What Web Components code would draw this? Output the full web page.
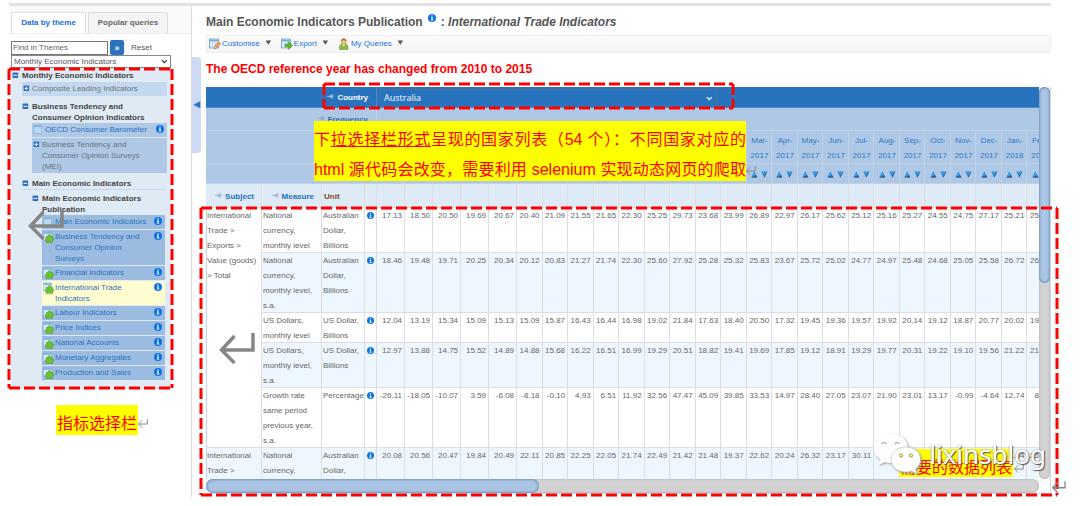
<!DOCTYPE html>
<html lang="en">
<head>
<meta charset="utf-8">
<title>Main Economic Indicators Publication</title>
<style>
body { margin: 0; background: #fff; font: 8px/11px "Liberation Sans", "Noto Sans CJK SC", sans-serif; color: #666; }
</style>
</head>
<body>
<stats-page></stats-page>
<script>
const make = (name, html, setup) => customElements.define(name, class extends HTMLElement {
  connectedCallback() {
    if (this.shadowRoot) return;
    const root = this.attachShadow({ mode: 'open' });
    const t = document.createElement('template');
    t.innerHTML = typeof html === 'function' ? html(this) : html;
    root.append(t.content.cloneNode(true));
    if (setup) setup(this, root);
  }
});

/* Round blue information badge */
make('info-dot', `<style>:host{display:block;width:8px;height:8px;flex:none}svg{display:block;width:100%;height:100%}</style>
<svg viewBox="0 0 16 16"><circle cx="8" cy="8" r="8" fill="#0b73ea"/><path d="M6 6.6h3.4v5h1.2v1.4H5.6v-1.4h1.2V8H6z" fill="#fff"/><circle cx="8" cy="4" r="1.5" fill="#fff"/></svg>`);

/* Small icons, picked by name */
const sheet = `<rect x="1" y="2" width="17" height="17" fill="#eaf6ff" stroke="#5f94c6" stroke-width="1.5"/><path d="M1 5h17" stroke="#6faadd" stroke-width="3"/><path d="M1 10h17M1 14.500h17M7 5v14M12.500 5v14" stroke="#a5cbe6" stroke-width="1"/>`;
const icons = {
  customise: sheet + `<path d="M10 21l1.500-6 7-8 4 3.500-7 8z" fill="#f0a24e" stroke="#b4691e"/><path d="M10 21l1.500-6 4 3.500z" fill="#f7dfb8" stroke="#8a5a2a" stroke-width=".6"/>`,
  export: sheet + `<path d="M8 12h6V7.500l8.500 7-8.500 7V17H8z" fill="#5cbd2b" stroke="#2e8410"/>`,
  user: `<path d="M3 22c-1-8 2-11 8-11s9 3 8 11z" fill="#8cbf3f" stroke="#5f8a22"/><path d="M8 12l3 4 3-4z" fill="#fff"/><circle cx="11" cy="6.500" r="5" fill="#f1c58d" stroke="#a86e2c"/><path d="M6 6c0-7 10-7 10 0-3-2-7-2-10 0z" fill="#b5732d"/>`,
  sheet: `<rect x="2" y="2" width="16" height="16" fill="#bcd9f2" stroke="#7fabd8"/><path d="M2 4h16" stroke="#7db1e2" stroke-width="3"/>`,
  puzzle: `<rect x="1" y="1" width="17" height="17" fill="#d8eaf8" stroke="#86aed6"/><path d="M1 3h17" stroke="#6fa6dc" stroke-width="3"/><path d="M7 10h4.500c-1.500-5 5-5 4 0H20v4c4-1 4 4.500 0 3.800V23h-5c1-3.500-3.500-3.500-2.500 0H7v-4c-3.500.8-3.500-5 0-4.200z" fill="#6cc332" stroke="#3e8f1b"/>`,
  plus: `<rect x="2" y="2" width="18" height="18" rx="2" fill="#2a6fb8"/><path d="M5 11h12M11 5v12" stroke="#fff" stroke-width="3"/>`,
  minus: `<rect x="2" y="2" width="18" height="18" rx="2" fill="#2a6fb8"/><path d="M5 11h12" stroke="#fff" stroke-width="3.500"/>`,
  pin: `<path d="M1 11h11M8 6l5 5-5 5M15 4v14M19 4v14M15 11h4" fill="none" stroke="currentColor" stroke-width="2"/>`,
  caret: `<path d="M2 5h18l-9 14z" fill="#555"/>`,
  chevron: `<path d="M3 7l8 8 8-8" fill="none" stroke="currentColor" stroke-width="4"/>`,
  up: `<path d="M1 21L11 2l10 19z" fill="#1d83d6"/><path d="M1 21h20l-4-7z" fill="#425a78"/><path d="M4 18L11 5l4 8z" fill="#3aa5f2"/>`,
  down: `<path d="M1 2h20L11 21z" fill="#1d83d6"/><path d="M21 2L11 21l-2-4z" fill="#425a78"/><path d="M4 4h13l-6 8z" fill="#3aa5f2"/>`,
  left: `<path d="M21 1v20L1 11z" fill="#2d70be"/>`
};
make('ui-icon', el => `<style>:host{display:block;width:11px;height:11px;flex:none}svg{display:block;width:100%;height:100%}</style>
<svg viewBox="0 0 23 23">${icons[el.getAttribute('name')]}</svg>`);

/* Paragraph-return mark */
make('return-mark', `<style>:host{display:block;color:#868686;width:10px;height:9px}svg{display:block;width:100%;height:100%}</style>
<svg viewBox="0 0 36 32"><path d="M33.500 1v17H3M15 4L2 18l13 13" fill="none" stroke="currentColor" stroke-width="3.500"/></svg>`);

/* Dashed red outline */
make('mark-box', `<style>:host{display:block;pointer-events:none}svg{display:block;width:100%;height:100%;overflow:visible}</style>
<svg><g stroke="#f00" stroke-width="3" stroke-dasharray="11 4"><line x1="0" y1="0" x2="100%" y2="0"/><line x1="100%" y1="0" x2="100%" y2="100%"/><line x1="0" y1="100%" x2="100%" y2="100%"/><line x1="0" y1="0" x2="0" y2="100%"/></g></svg>`);

/* Yellow note with red text */
make('mark-note', `<style>:host{display:block;box-sizing:border-box;background:#ff0;color:#f00;font-size:16px;line-height:30px;white-space:nowrap}:host([spread]){white-space:normal;text-align:justify;text-align-last:justify}</style><slot></slot>`);

make('theme-tabs', `<style>
:host{display:flex;gap:2px;padding:6px 2px 0;background:#fafafa;border-bottom:1px solid #eee}
button{font:bold 8px/20px "Liberation Sans",sans-serif;color:#666;background:#f4f4f4;border:1px solid #ddd;border-bottom:0;padding:0;flex:none;width:80px;border-radius:2px 2px 0 0}
button[aria-selected=true]{color:#1671e0;background:#fff;width:75px}
</style><button role="tab" aria-selected="true">Data by theme</button><button role="tab" aria-selected="false">Popular queries</button>`);

make('theme-search', `<style>
:host{display:block;padding:6px 20px 0 2px}
form{display:flex;align-items:center;gap:2px}
input{box-sizing:border-box;width:97px;height:14px;border:1px solid #777;padding:0 1px;font:8px "Liberation Sans",sans-serif;color:#555;margin:0}
input::placeholder{color:#666;opacity:1}
.go{width:14px;height:15px;border:0;padding:0;border-radius:2px;background:#2a73bf;color:#fff;font:bold 9px/14px "Liberation Sans",sans-serif}
.reset{border:0;background:none;padding:0 0 0 5px;font:8px "Liberation Sans",sans-serif;color:#555}
.pick{position:relative;height:13px}
select{appearance:none;box-sizing:border-box;display:block;width:100%;height:13px;border:1px solid #888;border-radius:0;background:#fff;padding:0 2px;font:8px "Liberation Sans",sans-serif;color:#556}
.pick ui-icon{position:absolute;right:3px;top:3px;width:7px;height:7px;color:#333}
</style><form><input aria-label="Find in Themes" placeholder="Find in Themes"><button class="go" type="button" aria-label="Search">»</button><button class="reset" type="reset">Reset</button></form>
<div class="pick"><select aria-label="Theme"><option>Monthly Economic Indicators</option></select><ui-icon name="chevron"></ui-icon></div>`);

/* Tree: heading rows and leaf rows */
make('tree-head', `<style>:host{display:flex;gap:3px;font-weight:bold;color:#444;padding-top:4px}ui-icon{width:7px;height:7px;margin-top:2px}</style><ui-icon name="minus"></ui-icon><span><slot></slot></span>`);
make('tree-leaf', el => `<style>
:host{display:flex;align-items:flex-start;gap:1px;box-sizing:border-box;min-height:14px;padding:1px 3px 1px 1px;margin-bottom:1px;background:#9bbce0}
:host([tone=soft]){background:#c3d8ee}:host([tone=mid]){background:#aec8e6}:host([tone=picked]){background:#fffcd0}
a{flex:1;color:#2d74bf;text-decoration:none}
:host([plain]) a{color:#6a7480}
info-dot{margin-top:1px}
ui-icon{height:12px}
ui-icon.box{width:7px;height:7px;margin:2px 1px 0 0}
</style><ui-icon class="${/plus/.test(el.getAttribute('icon')) ? 'box' : ''}" name="${el.getAttribute('icon')}"></ui-icon><a href="#"><slot></slot></a>${el.hasAttribute('plain') ? '' : '<info-dot></info-dot>'}`);

make('theme-tree', `<style>
:host{display:block;background:#dfeaf5;margin:0 20px 0 2px;padding:0 4px 8px 1px}
.a{margin-left:10px}.b{margin-left:10px}.c{margin:0 2px 0 10px}
.root{padding:2px 0 1px}
.line{border-bottom:1px solid #c3d8ee;margin-bottom:-1px}
</style>
<tree-head class="root">Monthly Economic Indicators</tree-head>
<div class="a"><tree-leaf tone="soft" icon="plus" plain>Composite Leading Indicators</tree-leaf>
<tree-head>Business Tendency and<br>Consumer Opinion Indicators</tree-head>
<div class="b"><tree-leaf tone="mid" icon="sheet">OECD Consumer Barometer</tree-leaf><tree-leaf tone="mid" icon="plus" plain>Business Tendency and<br>Consumer Opinion Surveys<br>(MEI)</tree-leaf></div>
<tree-head class="line">Main Economic Indicators</tree-head>
<div class="b"><tree-head>Main Economic Indicators<br>Publication</tree-head>
<div class="c"><tree-leaf icon="sheet">Main Economic Indicators</tree-leaf><tree-leaf icon="puzzle">Business Tendency and<br>Consumer Opinion<br>Surveys</tree-leaf><tree-leaf icon="puzzle">Financial Indicators</tree-leaf><tree-leaf tone="picked" icon="puzzle">International Trade<br>Indicators</tree-leaf><tree-leaf icon="puzzle">Labour Indicators</tree-leaf><tree-leaf icon="puzzle">Price Indices</tree-leaf><tree-leaf icon="puzzle">National Accounts</tree-leaf><tree-leaf icon="puzzle">Monetary Aggregates</tree-leaf><tree-leaf icon="puzzle">Production and Sales</tree-leaf></div></div></div>`);

make('data-toolbar', `<style>
:host{display:flex;gap:9px;align-items:center;box-sizing:border-box;height:18px;padding:0 2px;background:linear-gradient(#fcfcfc,#f4f4f4);border:1px solid #eee}
button{display:flex;align-items:center;gap:1px;border:0;background:none;padding:0;font:8px/16px "Liberation Sans",sans-serif;color:#1a74d8}
ui-icon{width:12px;height:12px}.c{width:7px;height:7px;margin:0 0 4px 4px}
</style><button><ui-icon name="customise"></ui-icon>Customise<ui-icon class="c" name="caret"></ui-icon></button><button><ui-icon name="export"></ui-icon>Export<ui-icon class="c" name="caret"></ui-icon></button><button><ui-icon name="user"></ui-icon>My Queries<ui-icon class="c" name="caret"></ui-icon></button>`);

const months = 'Jan Feb Mar Apr May Jun Jul Aug Sep Oct Nov Dec'.split(' ');
const periods = Array.from({ length: 26 }, (_, i) => [months[i % 12], 2016 + Math.floor(i / 12)]);
const rows = [
  ['National currency, monthly level', 'Australian Dollar, Billions', '17.13 18.50 20.50 19.69 20.67 20.40 21.09 21.55 21.65 22.30 25.25 29.73 23.68 23.99 26.89 22.97 26.17 25.62 25.12 25.16 25.27 24.55 24.75 27.17 25.21 25.10'],
  ['National currency, monthly level, s.a.', 'Australian Dollar, Billions', '18.46 19.48 19.71 20.25 20.34 20.12 20.83 21.27 21.74 22.30 25.60 27.92 25.28 25.32 25.83 23.67 25.72 25.02 24.77 24.97 25.48 24.68 25.05 25.58 26.72 26.10'],
  ['US Dollars, monthly level', 'US Dollar, Billions', '12.04 13.19 15.34 15.09 15.13 15.09 15.87 16.43 16.44 16.98 19.02 21.84 17.63 18.40 20.50 17.32 19.45 19.36 19.57 19.92 20.14 19.12 18.87 20.77 20.02 19.10'],
  ['US Dollars, monthly level, s.a.', 'US Dollar, Billions', '12.97 13.88 14.75 15.52 14.89 14.88 15.68 16.22 16.51 16.99 19.29 20.51 18.82 19.41 19.69 17.85 19.12 18.91 19.29 19.77 20.31 19.22 19.10 19.56 21.22 21.10'],
  ['Growth rate same period previous year, s.a.', 'Percentage', '-26.11 -18.05 -10.07 3.59 -6.08 -8.18 -0.10 4.93 6.51 11.92 32.56 47.47 45.09 39.85 33.53 14.97 28.40 27.05 23.07 21.90 23.01 13.17 -0.99 -4.64 12.74 8.10'],
  ['National currency, monthly level', 'Australian Dollar, Billions', '20.08 20.56 20.47 19.84 20.49 22.11 20.85 22.25 22.05 21.74 22.49 21.42 21.48 19.37 22.62 20.24 26.32 23.17 30.11 26.35 - - - - 24.64 25.10']
];
const subjects = { 0: ['International Trade > Exports > Value (goods) > Total', 5], 5: ['International Trade > Imports', 1] };

make('data-grid', `<style>
:host{display:grid;grid-template-columns:1fr 11px;grid-template-rows:392px 14px;border-right:1px solid #c8d8ea;border-bottom:1px solid #c8d8ea}
.view{overflow:hidden;min-width:0}
table{table-layout:fixed;border-collapse:separate;border-spacing:0;width:847px;line-height:15px;color:#666}
td,th{padding:0;vertical-align:top;text-align:left;font-weight:normal;box-shadow:inset -1px -1px #dedede}
tbody td.n{text-align:right;padding-right:3px;white-space:nowrap}
tbody tr:nth-child(even)>*,tbody tr:last-child>*{background:#eef7ff}
tbody tr>.s{background:#fff;box-shadow:inset 1px 0 #c3d5e8,inset -1px -1px #dedede;padding-left:1px}
tbody tr:last-child>.s{background:#eef7ff}
td info-dot{width:7px;height:7px;margin:4px 0 0 2px}
.m{padding-left:1px}
.country th,.country td{background:#2873be;color:#fff;height:21px;vertical-align:middle;box-shadow:inset -1px -1px #4d8ac8}
.freq>*{height:23px}.time>*{height:33px}.sort>*{height:20px}.dims>*{height:24px;background:#deeaf5;vertical-align:middle}
.freq>*,.time>*,.sort>*{background:#aec8e6;box-shadow:inset -1px -1px #bfd2e8}
.time th,.sort td{vertical-align:middle;text-align:center;color:#2f78c4}
thead .lab{text-align:right;font-weight:bold;vertical-align:middle;color:#2470bd;padding-right:9px}
thead .country .lab{color:#fff}
.lab ui-icon{display:inline-block;width:7px;height:7px;color:#8899aa;margin-right:3px}
.country .lab ui-icon{color:#dbe8f6}
.dims .lab{padding-right:8px}
.dims .unit{color:#7a4a2a;font-weight:bold;padding-left:2px}
.pair{display:flex;justify-content:center;gap:3px}
.pair ui-icon{width:7px;height:7px}
.pick{position:relative;width:338px;margin-left:2px;color:#fff}
select{appearance:none;display:block;box-sizing:border-box;width:100%;height:18px;border:1px solid #4a7199;border-radius:0;background:#2873be;color:#fff;padding:0 4px;font:9px "Open Sans","Liberation Sans",sans-serif}
.pick ui-icon{position:absolute;right:4px;top:6px;width:7px;height:7px}
.v,.h{background:#d2d2d2;box-shadow:inset 0 0 2px #999}
.v{border-radius:6px}.h{border-radius:7px}
.v i,.h i{display:block;background:#a9c5e3;box-shadow:inset 0 0 3px #3f6a96}
.v i{width:100%;height:50%;border-radius:6px}.h i{height:100%;width:40%;border-radius:7px}
</style>
<div class="view"><table><colgroup><col style="width:56px"><col style="width:60px"><col style="width:43px"><col style="width:12px"><col span="5" style="width:28px"><col span="21"></colgroup>
<thead></thead><tbody></tbody></table></div><div class="v"><i></i></div><div class="h"><i></i></div>`, (el, root) => {
  const pin = '<ui-icon name="pin"></ui-icon>';
  root.querySelector('thead').innerHTML = `
<tr class="country"><th class="lab" colspan="4"><label for="country">${pin}Country</label></th><td colspan="26"><div class="pick"><select id="country"><option>Australia</option></select><ui-icon name="chevron"></ui-icon></div></td></tr>
<tr class="freq"><th class="lab" colspan="4">${pin}Frequency</th><td colspan="26"></td></tr>
<tr class="time"><th class="lab" colspan="4"></th>${periods.map(([m, y], i) => `<th>${i < 14 ? '' : m + '-<br>' + y}</th>`).join('')}</tr>
<tr class="sort"><td colspan="4"></td>${periods.map(() => '<td><div class="pair"><ui-icon name="up"></ui-icon><ui-icon name="down"></ui-icon></div></td>').join('')}</tr>
<tr class="dims"><th class="lab">${pin}Subject</th><th class="lab">${pin}Measure</th><th class="unit">Unit</th><th></th>${periods.map(() => '<td></td>').join('')}</tr>`;
  root.querySelector('tbody').innerHTML = rows.map(([measure, unit, values], i) => `<tr>${subjects[i] ? `<td class="s" rowspan="${subjects[i][1]}">${subjects[i][0]}</td>` : ''}<td class="m">${measure}</td><td class="m">${unit}</td><td><info-dot></info-dot></td>${values.split(' ').map(v => `<td class="n">${v === '-' ? '' : v}</td>`).join('')}</tr>`).join('');
});

/* Chat-bubble watermark with the blog's name */
make('blog-mark', `<style>:host{display:flex;gap:6px;align-items:flex-start;color:#fff;font:26px/42px "Noto Sans",sans-serif;text-shadow:1px 1px 1px #555,0 0 2px #888}svg{width:50px;height:42px;flex:none;filter:drop-shadow(1px 1px 1px #999)}</style>
<svg viewBox="0 0 50 42"><path d="M18 1C8 1 1 7.500 1 15.500c0 5 2.500 8.500 6.500 11L5.500 32l6.500-3c2 .7 4 1 6.500 1C28 30 35 24 35 15.500S28 1 18 1z" fill="#fff"/><g fill="none" stroke="#999" stroke-width="1.200"><path d="M9 11c1-2 3-2 4 0M22 11c1-2 3-2 4 0"/></g><path d="M33 14c-9 0-15 5.500-15 12.500S24 39 33 39c2 0 4-.3 5.500-.8L44 41l-1.500-5c3-2.200 5-5.500 5-9.500C47.500 19.500 42 14 33 14z" fill="#fff" stroke="#bbb" stroke-width=".6"/><g fill="#ff3" stroke="#999"><circle cx="28" cy="22.500" r="1.700"/><circle cx="38" cy="22.500" r="1.700"/></g></svg><span><slot></slot></span>`);

make('stats-page', `<style>
:host{display:block;position:relative}
.page{padding:3px 29px 9px 9px}
.top{height:3px;background:#e2e2e2}
.cols{display:flex}
aside{box-sizing:border-box;width:183px;flex:none;border-right:1px solid #ddd}
main{flex:1;min-width:0;padding:6px 0 3px 5px}
.fold{flex:none;width:9px;height:96px;margin-top:51px;border:0;padding:0 0 0 1px;background:#cdd9f5;border-radius:0 4px 4px 0}
.fold ui-icon{width:8px;height:8px}
h1{display:flex;gap:5px;margin:0 0 3px;font-size:12px;line-height:20px;color:#555}
h1 info-dot{margin-top:2px}
h2{margin:6px 0 8px;font-size:12px;line-height:20px;color:#f00}
.over{position:absolute}
</style>
<div class="page"><div class="top"></div><div class="cols">
<aside><theme-tabs></theme-tabs><theme-search></theme-search><theme-tree></theme-tree></aside>
<button class="fold" aria-label="Hide themes"><ui-icon name="left"></ui-icon></button>
<main><h1>Main Economic Indicators Publication <info-dot></info-dot><span>: <em>International Trade Indicators</em></span></h1>
<data-toolbar></data-toolbar><h2>The OECD reference year has changed from 2010 to 2015</h2><data-grid></data-grid></main></div></div>
<mark-box class="over" style="left:9px;top:69px;width:163px;height:319px"></mark-box>
<mark-box class="over" style="left:324px;top:84px;width:409px;height:24px"></mark-box>
<mark-box class="over" style="left:201px;top:208px;right:23px;height:287px"></mark-box>
<mark-note spread class="over" style="left:314px;top:121px;width:432px;height:60px;padding-top:4px">下<u>拉选择栏形式</u>呈现的国家列表（54 个）：不同国家对应的<br>html 源代码会改变，需要利用 selenium 实现动态网页的爬取</mark-note>
<mark-note class="over" style="left:56px;top:405px;padding:4px 1px 0;height:30px">指标选择栏</mark-note>
<mark-note class="over" style="right:67px;top:449px;padding:4px 1px 0;height:28px">需要的数据列表</mark-note>
<return-mark class="over" style="left:746px;top:166px"></return-mark>
<return-mark class="over" style="left:138px;top:419px"></return-mark>
<return-mark class="over" style="right:56px;top:464px"></return-mark>
<return-mark class="over" style="right:14px;top:480px;width:14px;height:14px"></return-mark>
<return-mark class="over" style="left:28px;top:208px;width:37px;height:32px"></return-mark>
<return-mark class="over" style="left:219px;top:332px;width:37px;height:32px"></return-mark>
<blog-mark class="over" style="right:34px;top:433px">lixinsblog</blog-mark>`);
</script>
</body>
</html>
